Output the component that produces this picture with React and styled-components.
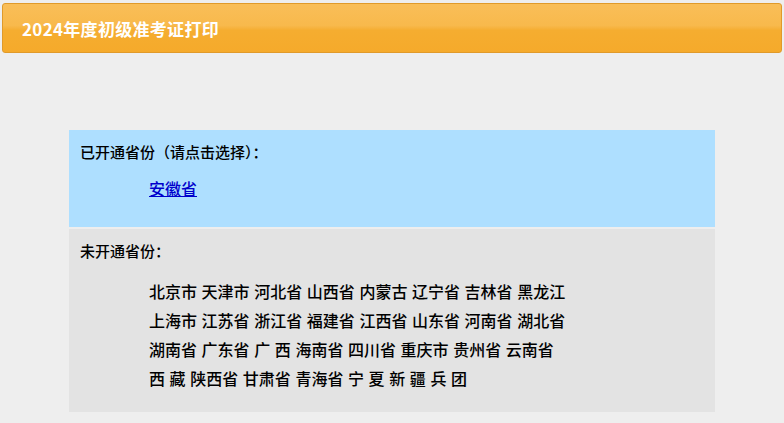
import React from 'react';
import styled, { createGlobalStyle } from 'styled-components';

const GlobalStyle = createGlobalStyle`
  html, body {
    margin: 0;
    padding: 0;
    background: #eeeeee;
    font-family: "Noto Sans CJK SC", "Liberation Sans", sans-serif;
    color: #000;
  }
`;

const Page = styled.div`
  padding: 3px 2px 0;
`;

const Header = styled.div`
  height: 48px;
  border: 1px solid #e09a2a;
  border-radius: 3px;
  background: linear-gradient(to bottom, #f9be58 0%, #f8b94c 45%, #f5ad30 55%, #f5aa2b 100%);
  display: flex;
  align-items: center;
  padding-left: 19px;
`;

const HeaderTitle = styled.h1`
  margin: 0;
  font-size: 17px;
  font-weight: bold;
  color: #fff;
  letter-spacing: 0.3px;
`;

const Content = styled.div`
  width: 646px;
  margin: 77px auto 0;
  display: flex;
  flex-direction: column;
  gap: 2px;
`;

const Section = styled.div`
  background: ${p => p.$bg};
  padding: 10px 11px 0;
  height: ${p => p.$height}px;
  box-sizing: border-box;
`;

const SectionTitle = styled.div`
  font-size: 15px;
  font-weight: 500;
  line-height: 24px;
`;

const List = styled.div`
  margin-top: ${p => p.$top}px;
  padding-left: 69px;
  font-size: 16px;
  font-weight: 500;
  line-height: 29px;
  word-spacing: 1px;
`;

const ProvinceLink = styled.a`
  color: #0000cc;
  text-decoration: underline;
  cursor: pointer;
`;

const Line = styled.div`
  white-space: nowrap;
`;

const closed = [
  ['北京市', '天津市', '河北省', '山西省', '内蒙古', '辽宁省', '吉林省', '黑龙江'],
  ['上海市', '江苏省', '浙江省', '福建省', '江西省', '山东省', '河南省', '湖北省'],
  ['湖南省', '广东省', '广 西', '海南省', '四川省', '重庆市', '贵州省', '云南省'],
  ['西 藏', '陕西省', '甘肃省', '青海省', '宁 夏', '新 疆', '兵 团'],
];

export default function App() {
  return (
    <>
      <GlobalStyle />
      <Page>
        <Header>
          <HeaderTitle>2024年度初级准考证打印</HeaderTitle>
        </Header>
        <Content>
          <Section $bg="#aedfff" $height={97}>
            <SectionTitle>已开通省份（请点击选择）：</SectionTitle>
            <List $top={10}>
              <ProvinceLink href="#">安徽省</ProvinceLink>
            </List>
          </Section>
          <Section $bg="#e3e3e3" $height={183}>
            <SectionTitle>未开通省份：</SectionTitle>
            <List $top={14}>
              {closed.map((row, i) => (
                <Line key={i}>{row.join(' ')}</Line>
              ))}
            </List>
          </Section>
        </Content>
      </Page>
    </>
  );
}
